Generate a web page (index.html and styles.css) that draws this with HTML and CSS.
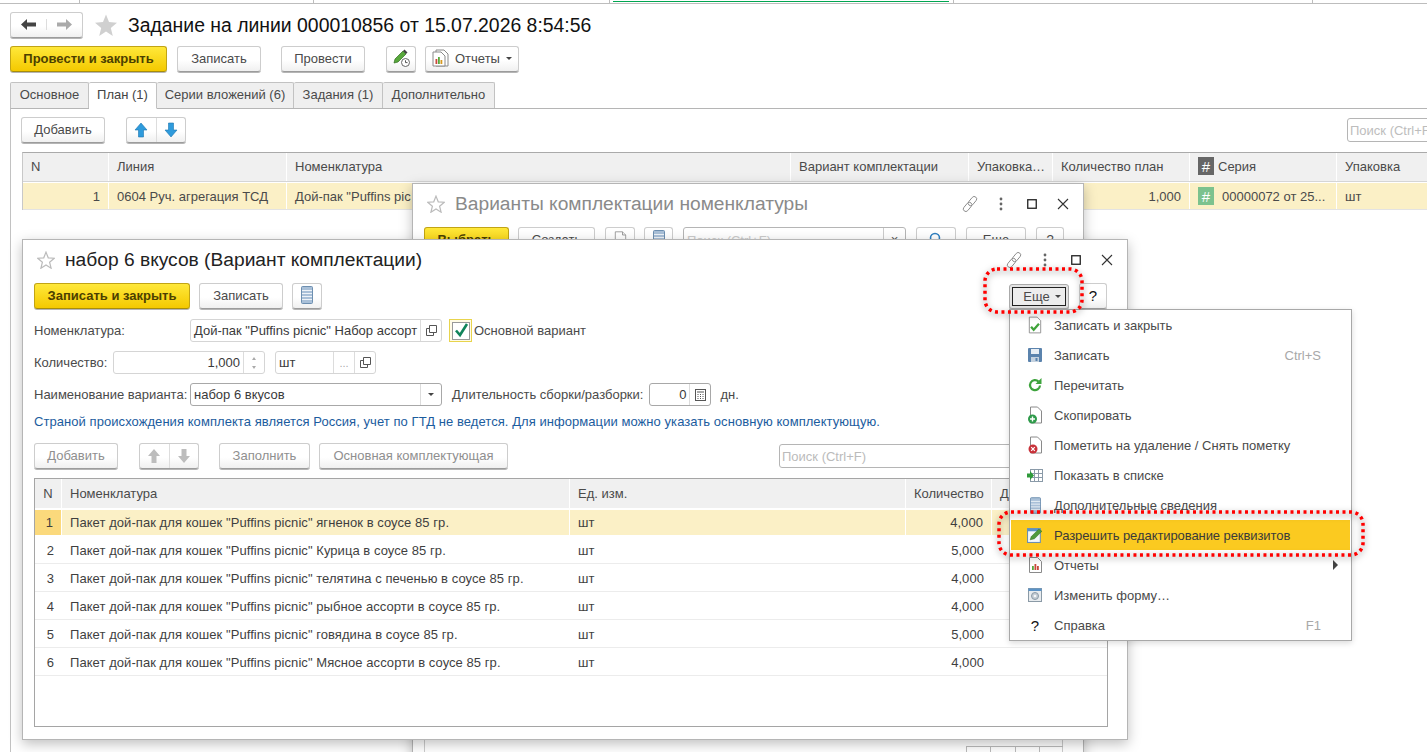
FILE: index.html
```html
<!DOCTYPE html>
<html lang="ru">
<head>
<meta charset="utf-8">
<title>Задание на линии</title>
<link rel="stylesheet" href="styles.css">
</head>
<body>
<svg class="defs" width="0" height="0">
  <defs>
    <symbol id="star" viewBox="0 0 24 24"><path d="M12 1.500l3 7.600 8 .6-6.200 5.200 2 8L12 18.600 5.200 23l2-8L1 9.700l8-.6z"/></symbol>
    <symbol id="up" viewBox="0 0 14 16"><path d="M7 1l6 7H9.500v7h-5V8H1z" fill="#2f9bdc" stroke="#1b75b0" stroke-width=".6"/></symbol>
    <symbol id="down" viewBox="0 0 14 16"><path d="M7 15l6-7H9.500V1h-5v7H1z" fill="#2f9bdc" stroke="#1b75b0" stroke-width=".6"/></symbol>
    <symbol id="upg" viewBox="0 0 14 16"><path d="M7 1l6 7H9.500v7h-5V8H1z" fill="#bdbdbd"/></symbol>
    <symbol id="downg" viewBox="0 0 14 16"><path d="M7 15l6-7H9.500V1h-5v7H1z" fill="#bdbdbd"/></symbol>
    <symbol id="list" viewBox="0 0 12 18"><rect x=".5" y=".5" width="11" height="17" rx="1" fill="#a9c0d8" stroke="#6d8fb0"/><path d="M1 4.500h10M1 7.500h10M1 10.500h10M1 13.500h10" stroke="#eef3f8"/></symbol>
    <symbol id="link" viewBox="0 0 18 18"><g fill="none" stroke="#8a8a8a" stroke-width=".9" transform="rotate(40 9 9)"><rect x="6.500" y="0" width="5" height="10.500" rx="2.500"/><rect x="6.500" y="7.500" width="5" height="10.500" rx="2.500"/></g></symbol>
    <symbol id="dots" viewBox="0 0 4 14"><circle cx="2" cy="2" r="1.400" fill="#666"/><circle cx="2" cy="7" r="1.400" fill="#666"/><circle cx="2" cy="12" r="1.400" fill="#666"/></symbol>
    <symbol id="max" viewBox="0 0 10 10"><rect x=".75" y=".75" width="8.500" height="8.500" fill="none" stroke="#222" stroke-width="1.300"/></symbol>
    <symbol id="close" viewBox="0 0 12 12"><path d="M1 1l10 10M11 1L1 11" stroke="#333" stroke-width="1.100"/></symbol>
    <symbol id="open" viewBox="0 0 11 11"><path d="M3.500 7.500v-7h7v7zM3.500 3.500H.5v7h7v-3" fill="none" stroke="#555"/></symbol>
    <symbol id="doc" viewBox="0 0 16 20"><path d="M1.500 1h9l4 4v14h-13z" fill="#fff" stroke="#8a8a8a"/><path d="M10.500 1v4h4" fill="#eee" stroke="#8a8a8a"/></symbol>
  </defs>
</svg>

<div class="topstrip">
  <div class="strip s1"></div><div class="strip s2"></div><div class="strip s3"></div><div class="strip s4"></div><div class="strip s5"></div>
</div>

<main class="page">
  <header class="pagehead">
    <div class="btn navgroup">
      <span class="navcell"><svg width="15" height="11" viewBox="0 0 15 11"><path d="M0 5.500L6 0v3.500h9v4H6V11z" fill="#444"/></svg></span>
      <span class="navcell"><svg width="15" height="11" viewBox="0 0 15 11"><path d="M15 5.500L9 0v3.500H0v4h9V11z" fill="#aaa"/></svg></span>
    </div>
    <svg class="bigstar" width="24" height="24"><use href="#star"/></svg>
    <h1 class="pagetitle">Задание на линии 000010856 от 15.07.2026 8:54:56</h1>
  </header>
  <div class="cmdbar main-cmd">
    <button class="btn primary w157">Провести и закрыть</button>
    <button class="btn w84 ml10">Записать</button>
    <button class="btn w84 ml20">Провести</button>
    <button class="btn w30 ml21"><svg width="20" height="20" viewBox="0 0 20 20"><path d="M3 15l1-4 8-8 3 3-8 8z" fill="#58a83c" stroke="#2f6d1e" stroke-width=".7"/><path d="M12 3l1.500-1.500 3 3L15 6z" fill="#444"/><circle cx="14.500" cy="14.500" r="4" fill="#fff" stroke="#666"/><path d="M14.500 12.300v2.300h2" fill="none" stroke="#555"/></svg></button>
    <button class="btn w94 ml9 gapicon"><svg width="17" height="18" viewBox="0 0 17 18"><path d="M4 1h8l4 4v12H4z" fill="#fff" stroke="#8a8a8a"/><path d="M1 3h8l4 4v10H1z" fill="#fff" stroke="#8a8a8a"/><rect x="3.500" y="10" width="1.800" height="5" fill="#c9483b"/><rect x="6" y="8" width="1.800" height="7" fill="#58a83c"/><rect x="8.500" y="11" width="1.800" height="4" fill="#d69a22"/></svg>Отчеты<i class="caret"></i></button>
  </div>
  <nav class="tabs">
    <span class="tab tab1">Основное</span>
    <span class="tab tab2 on">План (1)</span>
    <span class="tab tab3">Серии вложений (6)</span>
    <span class="tab tab4">Задания (1)</span>
    <span class="tab tab5">Дополнительно</span>
  </nav>
  <section class="panel">
    <div class="cmdbar panel-cmd">
      <button class="btn w84">Добавить</button>
      <div class="btn group ml21">
        <span class="gcell"><svg width="14" height="16"><use href="#up"/></svg></span>
        <span class="gcell"><svg width="14" height="16"><use href="#down"/></svg></span>
      </div>
      <div class="search mainsearch">Поиск (Ctrl+F)</div>
    </div>
    <div class="mtable">
      <div class="mrow mhead">
        <span>N</span><span>Линия</span><span>Номенклатура</span><span>Вариант комплектации</span><span>Упаковка…</span><span>Количество план</span><span class="serhead"><b class="hash dark">#</b>Серия</span><span>Упаковка</span>
      </div>
      <div class="mrow mbody">
        <span class="num">1</span><span>0604 Руч. агрегация ТСД</span><span>Дой-пак "Puffins pic</span><span></span><span></span><span class="num">1,000</span><span class="serhead"><b class="hash green">#</b>00000072 от 25...</span><span>шт</span>
      </div>
    </div>
  </section>
</main>

<section class="win win2">
  <div class="wintitle">
    <svg class="smallstar" width="18" height="18"><use href="#star"/></svg>
    <h2 class="wintext grey">Варианты комплектации номенклатуры</h2>
    <div class="winctl">
      <span class="ctl"><svg width="18" height="18"><use href="#link"/></svg></span>
      <span class="ctl"><svg width="4" height="14"><use href="#dots"/></svg></span>
      <span class="ctl"><svg width="10" height="10"><use href="#max"/></svg></span>
      <span class="ctl"><svg width="12" height="12"><use href="#close"/></svg></span>
    </div>
  </div>
  <div class="cmdbar win2cmd">
    <button class="btn primary w85">Выбрать</button>
    <button class="btn w77 ml9">Создать</button>
    <button class="btn w30 ml10"><svg width="13" height="16"><use href="#doc"/></svg></button>
    <button class="btn w29 ml9"><svg width="12" height="18"><use href="#list"/></svg></button>
    <div class="search s2field"><span class="s2text">Поиск (Ctrl+F)</span><span class="s2x">×</span></div>
    <button class="btn w40 ml10"><svg width="14" height="14" viewBox="0 0 14 14"><circle cx="6" cy="6" r="4.500" fill="none" stroke="#2f7fc0" stroke-width="1.600"/></svg></button>
    <button class="btn w60 ml10">Еще</button>
    <button class="btn w28 ml10">?</button>
  </div>
  <div class="win2body"><div class="pager"><i></i><i></i><i></i><i></i></div></div>
</section>

<section class="win win3">
  <div class="wintitle">
    <svg class="smallstar" width="18" height="18"><use href="#star"/></svg>
    <h2 class="wintext">набор 6 вкусов (Вариант комплектации)</h2>
    <div class="winctl">
      <span class="ctl"><svg width="18" height="18"><use href="#link"/></svg></span>
      <span class="ctl"><svg width="4" height="14"><use href="#dots"/></svg></span>
      <span class="ctl"><svg width="10" height="10"><use href="#max"/></svg></span>
      <span class="ctl"><svg width="12" height="12"><use href="#close"/></svg></span>
    </div>
  </div>
  <div class="cmdbar">
    <button class="btn primary w156">Записать и закрыть</button>
    <button class="btn w84 ml9">Записать</button>
    <button class="btn w30 ml9"><svg width="12" height="18"><use href="#list"/></svg></button>
    <button class="btn more"><span class="moreinner">Еще<i class="caret"></i></span></button>
    <button class="btn w28 ml10 help">?</button>
  </div>

  <div class="frow r1">
    <label class="lbl w156l">Номенклатура:</label>
    <div class="field w252"><span class="ftext">Дой-пак "Puffins picnic" Набор ассорт</span><span class="fcell"><svg width="11" height="11"><use href="#open"/></svg></span></div>
    <span class="check"><svg width="18" height="18" viewBox="0 0 18 18"><rect x=".5" y=".5" width="17" height="17" fill="#fff" stroke="#999"/><path d="M4 8.500l4 4.500 7-11" fill="none" stroke="#11845a" stroke-width="2.600"/></svg></span>
    <span class="checklbl">Основной вариант</span>
  </div>
  <div class="frow r2">
    <label class="lbl w79l">Количество:</label>
    <div class="field w152"><span class="ftext right">1,000</span><span class="fcell spin"><i class="sup"></i><i class="sdown"></i></span></div>
    <div class="field w101 ml10"><span class="ftext">шт</span><span class="fcell dots">...</span><span class="fcell"><svg width="11" height="11"><use href="#open"/></svg></span></div>
  </div>
  <div class="frow r3">
    <label class="lbl w156l">Наименование варианта:</label>
    <div class="field w252 dark"><span class="ftext">набор 6 вкусов</span><span class="fcell"><i class="caret"></i></span></div>
    <label class="lbl durlbl">Длительность сборки/разборки:</label>
    <div class="field w62 dark"><span class="ftext right">0</span><span class="fcell"><svg width="11" height="12" viewBox="0 0 11 12"><rect x=".5" y=".5" width="10" height="11" fill="none" stroke="#555"/><path d="M2 3h7M2.500 5.500h1M5 5.500h1M7.500 5.500h1M2.500 7.500h1M5 7.500h1M7.500 7.500h1M2.500 9.500h1M5 9.500h1M7.500 9.500h1" stroke="#555"/></svg></span></div>
    <span class="dn">дн.</span>
  </div>
  <p class="info">Страной происхождения комплекта является Россия, учет по ГТД не ведется. Для информации можно указать основную комплектующую.</p>
  <div class="cmdbar tablecmd">
    <button class="btn off w84">Добавить</button>
    <div class="btn off group2 ml21">
      <span class="gcell"><svg width="14" height="16"><use href="#upg"/></svg></span>
      <span class="gcell"><svg width="14" height="16"><use href="#downg"/></svg></span>
    </div>
    <button class="btn off w91 ml20">Заполнить</button>
    <button class="btn off w189 ml9">Основная комплектующая</button>
    <div class="search s3field">Поиск (Ctrl+F)</div>
  </div>
  <div class="itable">
    <div class="irow ihead"><span>N</span><span>Номенклатура</span><span>Ед. изм.</span><span>Количество</span><span>Д</span></div>
    <div class="irow ibody sel"><span class="idx">1</span><span>Пакет дой-пак для кошек "Puffins picnic" ягненок в соусе 85 гр.</span><span>шт</span><span class="num">4,000</span><span></span></div>
    <div class="irow ibody"><span class="idx">2</span><span>Пакет дой-пак для кошек "Puffins picnic" Курица в соусе 85 гр.</span><span>шт</span><span class="num">5,000</span><span></span></div>
    <div class="irow ibody"><span class="idx">3</span><span>Пакет дой-пак для кошек "Puffins picnic" телятина с печенью в соусе 85 гр.</span><span>шт</span><span class="num">4,000</span><span></span></div>
    <div class="irow ibody"><span class="idx">4</span><span>Пакет дой-пак для кошек "Puffins picnic" рыбное ассорти в соусе 85 гр.</span><span>шт</span><span class="num">4,000</span><span></span></div>
    <div class="irow ibody"><span class="idx">5</span><span>Пакет дой-пак для кошек "Puffins picnic" говядина в соусе 85 гр.</span><span>шт</span><span class="num">5,000</span><span></span></div>
    <div class="irow ibody"><span class="idx">6</span><span>Пакет дой-пак для кошек "Puffins picnic" Мясное ассорти в соусе 85 гр.</span><span>шт</span><span class="num">4,000</span><span></span></div>
  </div>
</section>

<nav class="menu">
  <div class="mi"><span class="mic"><svg width="14" height="18" viewBox="0 0 16 20"><path d="M1.500 1h9l4 4v14h-13z" fill="#fff" stroke="#8a8a8a"/><path d="M3.500 12l3 3.500 6-7" fill="none" stroke="#3fa33a" stroke-width="2.600"/></svg></span><span class="mt">Записать и закрыть</span></div>
  <div class="mi"><span class="mic"><svg width="14" height="14" viewBox="0 0 14 14"><rect width="14" height="14" rx="1" fill="#5b83ad"/><rect x="3" y="1" width="8" height="5" fill="#e8eef4"/><rect x="3" y="9" width="8" height="5" fill="#c5d2df"/><rect x="7.500" y="10" width="2" height="3" fill="#5b83ad"/></svg></span><span class="mt">Записать</span><span class="mk">Ctrl+S</span></div>
  <div class="mi"><span class="mic"><svg width="14" height="14" viewBox="0 0 14 14"><path d="M12 7.500a5 5 0 1 1-1.500-4" fill="none" stroke="#3da33c" stroke-width="2.200"/><path d="M13.500 0v6h-6z" fill="#3da33c"/></svg></span><span class="mt">Перечитать</span></div>
  <div class="mi"><span class="mic"><svg width="15" height="18" viewBox="0 0 15 18"><path d="M2.500 1h7l4 4v12h-11z" fill="#fff" stroke="#8a8a8a"/><circle cx="4.500" cy="13" r="4.500" fill="#2e9a4a"/><path d="M4.500 10.500v5M2 13h5" stroke="#fff" stroke-width="1.400"/></svg></span><span class="mt">Скопировать</span></div>
  <div class="mi"><span class="mic"><svg width="15" height="18" viewBox="0 0 15 18"><path d="M2.500 1h7l4 4v12h-11z" fill="#fff" stroke="#8a8a8a"/><circle cx="5" cy="13" r="4.500" fill="#c8323a"/><path d="M3.200 11.200l3.600 3.600M6.800 11.200l-3.600 3.600" stroke="#fff" stroke-width="1.200"/></svg></span><span class="mt">Пометить на удаление / Снять пометку</span></div>
  <div class="mi"><span class="mic"><svg width="16" height="13" viewBox="0 0 16 13"><rect x="3.500" y=".5" width="12" height="12" fill="#fff" stroke="#8a9aa8"/><path d="M7.500 1v11M11.500 1v11M4 4.500h11M4 8.500h11" stroke="#8a9aa8"/><path d="M0 4.500h3V2l4 4.500-4 4.500V8.500H0z" fill="#2e9a3a"/></svg></span><span class="mt">Показать в списке</span></div>
  <div class="mi"><span class="mic"><svg width="11" height="17"><use href="#list"/></svg></span><span class="mt">Дополнительные сведения</span></div>
  <div class="mi hot"><span class="mic"><svg width="16" height="16" viewBox="0 0 15 15"><rect x=".5" y="1.500" width="12" height="13" fill="#f4f8fb" stroke="#6d8fb0"/><rect x=".5" y="1.500" width="12" height="2.500" fill="#5b93c7"/><path d="M3 12l1-3 7-7 3 2-7 7z" fill="#4f9a3c" stroke="#2f6d1e" stroke-width=".5"/></svg></span><span class="mt">Разрешить редактирование реквизитов</span></div>
  <div class="mi"><span class="mic"><svg width="13" height="16" viewBox="0 0 13 16"><path d="M.5.500h8l4 4v11H.5z" fill="#fff" stroke="#8a8a8a"/><rect x="3" y="9" width="1.800" height="4" fill="#58a83c"/><rect x="5.500" y="7" width="1.800" height="6" fill="#c9483b"/><rect x="8" y="9" width="1.800" height="4" fill="#c9483b"/></svg></span><span class="mt">Отчеты</span><i class="submenu"></i></div>
  <div class="mi"><span class="mic"><svg width="14" height="14" viewBox="0 0 14 14"><rect x=".5" y=".5" width="13" height="13" fill="#e8ecef" stroke="#8b9aa6"/><rect x=".5" y=".5" width="13" height="2.500" fill="#5b93c7"/><circle cx="7" cy="8" r="3.500" fill="#c3ccd4" stroke="#8b9aa6"/><circle cx="7" cy="8" r="1.300" fill="#f4f6f8"/></svg></span><span class="mt">Изменить форму…</span></div>
  <div class="mi"><span class="mic qmark">?</span><span class="mt">Справка</span><span class="mk">F1</span></div>
</nav>

<svg class="mark mark-more" width="101" height="47"><rect x="2" y="2" width="97" height="43" rx="12"/></svg>
<svg class="mark mark-item" width="368" height="47"><rect x="2" y="2" width="364" height="43" rx="12"/></svg>
</body>
</html>
```
FILE: styles.css
```css
* { box-sizing: border-box; }
html, body { margin: 0; padding: 0; width: 1427px; height: 752px; overflow: hidden; background: #fff; }
body { position: relative; font-family: "Liberation Sans", Arial, sans-serif; font-size: 13px; color: #4a4a4a; }
h1, h2, p { margin: 0; font-weight: normal; }
.defs { position: absolute; }

.topstrip { display: flex; height: 4px; border-bottom: 1px solid #bdbdbd; }
.strip { height: 3px; border-right: 1px solid #bdbdbd; flex: none; }
.s1 { width: 80px; } .s2 { width: 234px; } .s3 { width: 296px; }
.s4 { width: 336px; margin-left: 3px; border-right: 0; border-bottom: 1px solid #00a651; height: 2px; }
.s5 { width: 360px; margin-left: 4px; border-left: 1px solid #bdbdbd; }

.page { display: flex; flex-direction: column; padding: 9px 0 0 10px; height: 748px; overflow: hidden; }
.pagehead { display: flex; align-items: center; height: 24px; }
.navgroup { display: flex; width: 73px; height: 22px; padding: 0; }
.navcell { flex: 1; display: flex; align-items: center; justify-content: center; }
.navcell + .navcell { border-left: 1px solid #ddd; }
.bigstar { margin-left: 11px; fill: #d0d0d0; }
.pagetitle { margin-left: 10px; font-size: 19.4px; line-height: 24px; color: #111; white-space: nowrap; }

.cmdbar { display: flex; align-items: center; height: 26px; flex: none; }
.main-cmd { margin-top: 9px; }
.btn {
  display: inline-flex; align-items: center; justify-content: center; flex: none; height: 26px; padding: 0 0 2px;
  font: 13px "Liberation Sans", Arial, sans-serif; color: #4a4a4a;
  background: linear-gradient(#fff 55%, #f0f0f0); border: 1px solid #cdcdcd; border-bottom-color: #9c9c9c;
  border-radius: 3px; box-shadow: 0 1px 0 #b5b5b5;
}
.primary { font-weight: bold; color: #4c3f00; background: linear-gradient(#ffe83a, #f4c900); border-color: #c1a415; border-bottom-color: #a88d0a; }
.off { color: #8f8f8f; }
.w157 { width: 157px; } .w156 { width: 156px; } .w84 { width: 84px; } .w30 { width: 30px; } .w29 { width: 29px; }
.w94 { width: 94px; } .w85 { width: 85px; } .w77 { width: 77px; } .w40 { width: 40px; } .w60 { width: 60px; }
.w28 { width: 28px; } .w91 { width: 91px; } .w189 { width: 189px; }
.ml9 { margin-left: 9px; } .ml10 { margin-left: 10px; } .ml20 { margin-left: 20px; } .ml21 { margin-left: 21px; }
.gapicon { justify-content: flex-start; padding-left: 6px; gap: 6px; }
.gapicon .caret { margin-left: 0; }
.caret { display: inline-block; flex: none; width: 0; height: 0; margin-left: 5px; border: 3px solid transparent; border-top: 3px solid #444; border-bottom: 0; }

.tabs { display: flex; height: 27px; margin-top: 10px; }
.tab { display: flex; align-items: center; justify-content: center; height: 27px; padding-bottom: 2px; background: #efefef; border: 1px solid #c2c2c2; border-bottom: 1px solid #b5b5b5; border-left: 0; border-radius: 2px 2px 0 0; }
.tab1 { width: 79px; border-left: 1px solid #c2c2c2; } .tab2 { width: 68px; } .tab3 { width: 137px; } .tab4 { width: 89px; } .tab5 { width: 112px; }
.tab.on { background: #fff; border-bottom-color: #fff; position: relative; color: #444; }
.panel { margin-top: -1px; padding: 8px 0 0 10px; border-top: 1px solid #b5b5b5; border-left: 1px solid #c2c2c2; flex: 1; }
.group, .group2 { display: flex; width: 60px; padding: 0; }
.gcell { flex: 1; height: 100%; display: flex; align-items: center; justify-content: center; }
.gcell + .gcell { border-left: 1px solid #ddd; }
.search { height: 24px; padding-left: 2px; display: flex; align-items: center; color: #bdbdbd; background: #fff; border: 1px solid #b5b5b5; border-radius: 3px; white-space: nowrap; overflow: hidden; flex: none; }
.mainsearch { margin-left: 1161px; width: 100px; }

.mtable { margin: 9px 0 0 1px; width: 1500px; border-left: 1px solid #c8c8c8; border-top: 1px solid #aaa; }
.mrow { display: grid; grid-template-columns: 86px 178px 504px 178px 84px 137px 147px 200px; }
.mrow > span { display: flex; align-items: center; padding: 0 8px; white-space: nowrap; overflow: hidden; }
.mhead { height: 29px; background: #f0f0f0; border-bottom: 1px solid #d5d5d5; }
.mhead > span { border-right: 1px solid #fff; padding-bottom: 2px; }
.mbody { height: 27px; background: #fbf0c6; border-bottom: 1px solid #e3e3e3; margin-top: 1px; }
.mbody > span { border-right: 1px solid #fff; }
.mrow > .num { justify-content: flex-end; }
.hash { display: inline-flex; align-items: center; justify-content: center; width: 16px; height: 18px; margin-right: 5px; font-size: 15px; font-weight: normal; color: #fff; }
.hash.dark { background: #666; margin-right: 4px; }
.hash.green { background: #7cc28e; margin-right: 8px; }

.win { position: absolute; display: flex; flex-direction: column; background: #fff; border: 1px solid #b5b5b5; box-shadow: 0 4px 12px rgba(0,0,0,.25); }
.win2 { left: 412px; top: 183px; width: 672px; height: 580px; padding: 0 20px 0 11px; }
.win3 { left: 22px; top: 239px; width: 1106px; height: 501px; padding: 0 20px 0 11px; }
.wintitle { display: flex; align-items: center; height: 43px; padding-bottom: 4px; flex: none; }
.smallstar { margin-left: 3px; fill: #fff; stroke: #bbb; stroke-width: 1.600; }
.wintext { margin-left: 10px; font-size: 19.2px; color: #222; white-space: nowrap; }
.wintext.grey { color: #8a8a8a; }
.winctl { display: flex; align-items: center; margin-left: auto; margin-right: -15px; }
.ctl { display: flex; align-items: center; justify-content: center; width: 31px; }
.s2field { margin-left: 10px; width: 223px; height: 26px; color: #ccc; padding-left: 3px; }
.s2text { flex: 1; }
.s2x { width: 22px; text-align: center; border-left: 1px solid #ccc; line-height: 24px; color: #555; }
.win2body { flex: 1; margin: 10px 0 0 0; border: 1px solid #ccc; position: relative; }
.pager { position: absolute; right: -1px; top: 482px; display: flex; width: 97px; height: 30px; border-top: 1px solid #bbb; }
.pager i { flex: 1; border-left: 1px solid #bbb; }

.more { margin-left: auto; width: 60px; height: 25px; padding: 2px; background: #e4e4e4; border-color: #aaa; }
.moreinner { display: flex; align-items: center; justify-content: center; width: 100%; height: 100%; border: 1px solid #222; background: #ededed; padding-left: 6px; }
.help { color: #111; font-size: 15px; }

.frow { display: flex; align-items: center; height: 23px; flex: none; white-space: nowrap; }
.r1 { margin-top: 10px; } .r2, .r3 { margin-top: 9px; }
.lbl { flex: none; }
.w156l { width: 156px; } .w79l { width: 79px; }
.field { display: flex; height: 23px; border: 1px solid #d5d5d5; border-radius: 3px; background: #fff; flex: none; overflow: hidden; }
.field.dark { border-color: #a8a8a8; }
.w252 { width: 252px; } .w152 { width: 152px; } .w101 { width: 101px; } .w62 { width: 62px; }
.ftext { flex: 1; min-width: 0; padding: 0 3px; line-height: 21px; white-space: nowrap; overflow: hidden; color: #3a3a3a; }
.ftext.right { text-align: right; }
.fcell { flex: none; width: 21px; display: flex; align-items: center; justify-content: center; border-left: 1px solid #dcdcdc; }
.fcell .caret { margin: 0; }
.fcell.dots { color: #aaa; font-size: 11px; }
.spin { flex-direction: column; gap: 6px; }
.sup, .sdown { width: 0; height: 0; border: 2px solid transparent; }
.sup { border-bottom: 3px solid #aaa; border-top: 0; }
.sdown { border-top: 3px solid #aaa; border-bottom: 0; }
.check { display: flex; align-items: center; justify-content: center; width: 23px; height: 23px; margin-left: 7px; border: 1px solid #e8d44d; background: #fffbe6; flex: none; }
.checklbl { margin-left: 2px; }
.durlbl { margin-left: 10px; margin-right: 6px; }
.dn { margin-left: 9px; }
.info { margin-top: 7px; height: 18px; line-height: 18px; color: #1b5c9e; white-space: nowrap; letter-spacing: .06px; }
.tablecmd { margin-top: 12px; }
.s3field { margin-left: 271px; width: 330px; color: #bbb; }

.itable { margin: 9px -1px 0 0; height: 249px; border: 1px solid #a5a5a5; overflow: hidden; flex: none; }
.irow { display: grid; grid-template-columns: 27px 508px 336px 86px 1fr; }
.irow > span { display: flex; align-items: center; padding: 0 8px; white-space: nowrap; overflow: hidden; }
.ihead { height: 29px; background: #f0f0f0; }
.ihead > span { border-right: 1px solid #fff; }
.ihead > span:first-child { justify-content: center; padding: 0; }
.ibody { height: 28px; padding-top: 1px; border-bottom: 1px solid #ececec; color: #3f3f3f; letter-spacing: .06px; }
.irow > .idx { justify-content: flex-end; padding: 0 8px 0 0; }
.irow > .num { justify-content: flex-end; }
.sel { background: #fbf0c6; margin-top: 2px; height: 26px; padding-top: 0; border-bottom: 1px solid #fff; }
.sel > span { border-right: 1px solid #fff; }
.sel > .idx { background: #fbd97c; }

.menu { position: absolute; left: 1009px; top: 309px; width: 343px; height: 332px; padding: 0 1px; background: #fff; border: 1px solid #a8a8a8; box-shadow: 0 2px 6px rgba(0,0,0,.15); }
.mi { display: flex; align-items: center; height: 30px; padding-left: 14px; padding-right: 29px; color: #4a4a4a; white-space: nowrap; }
.mic { display: flex; align-items: center; justify-content: center; width: 20px; margin-right: 9px; flex: none; }
.mt { flex: 1; }
.mk { color: #a8a8a8; }
.hot { background: #fbca20; color: #3a3a3a; }
.hot .mt { letter-spacing: -.08px; }
.submenu { width: 0; height: 0; margin-right: -17px; border: 5px solid transparent; border-left: 5px solid #444; border-right: 0; }
.qmark { color: #111; font-size: 15px; }

.mark { position: absolute; filter: drop-shadow(0 2px 3px rgba(0,0,0,.5)); }
.mark rect { fill: none; stroke: #f00; stroke-width: 3.500; stroke-dasharray: 3 3.500; }
.mark-more { left: 983px; top: 267px; }
.mark-item { left: 997px; top: 510px; }
```
